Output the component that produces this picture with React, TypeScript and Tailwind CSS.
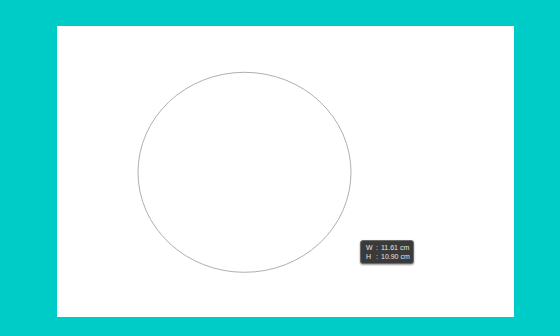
import React from "react";

export default function App() {
  return (
    <div className="w-[560px] h-[336px] bg-[#00ccc7] overflow-hidden pt-[26px] pl-[57px]">
      <div className="relative w-[457px] h-[291px] bg-white">
        <svg className="absolute left-0 top-0" width="457" height="291">
          <ellipse cx="187.5" cy="146.3" rx="106.5" ry="100" fill="none" stroke="#9a9a9a" strokeWidth="0.8" />
        </svg>
        <div
          className="absolute left-[303px] top-[214px] w-[54px] h-[24px] rounded-[3px] bg-[#3a3a3a] border border-[#6a6a6a] shadow-[0_1px_2px_rgba(0,0,0,0.4)] text-[#e4e4e4] text-[7px] leading-[9px] pl-[5px] pt-[2px]"
          style={{ fontFamily: '"Liberation Sans", Arial, sans-serif' }}
        >
          <div className="flex">
            <span className="w-[10px]">W</span>
            <span className="w-[5px]">:</span>
            <span>11.61 cm</span>
          </div>
          <div className="flex">
            <span className="w-[10px]">H</span>
            <span className="w-[5px]">:</span>
            <span>10.90 cm</span>
          </div>
        </div>
      </div>
    </div>
  );
}
